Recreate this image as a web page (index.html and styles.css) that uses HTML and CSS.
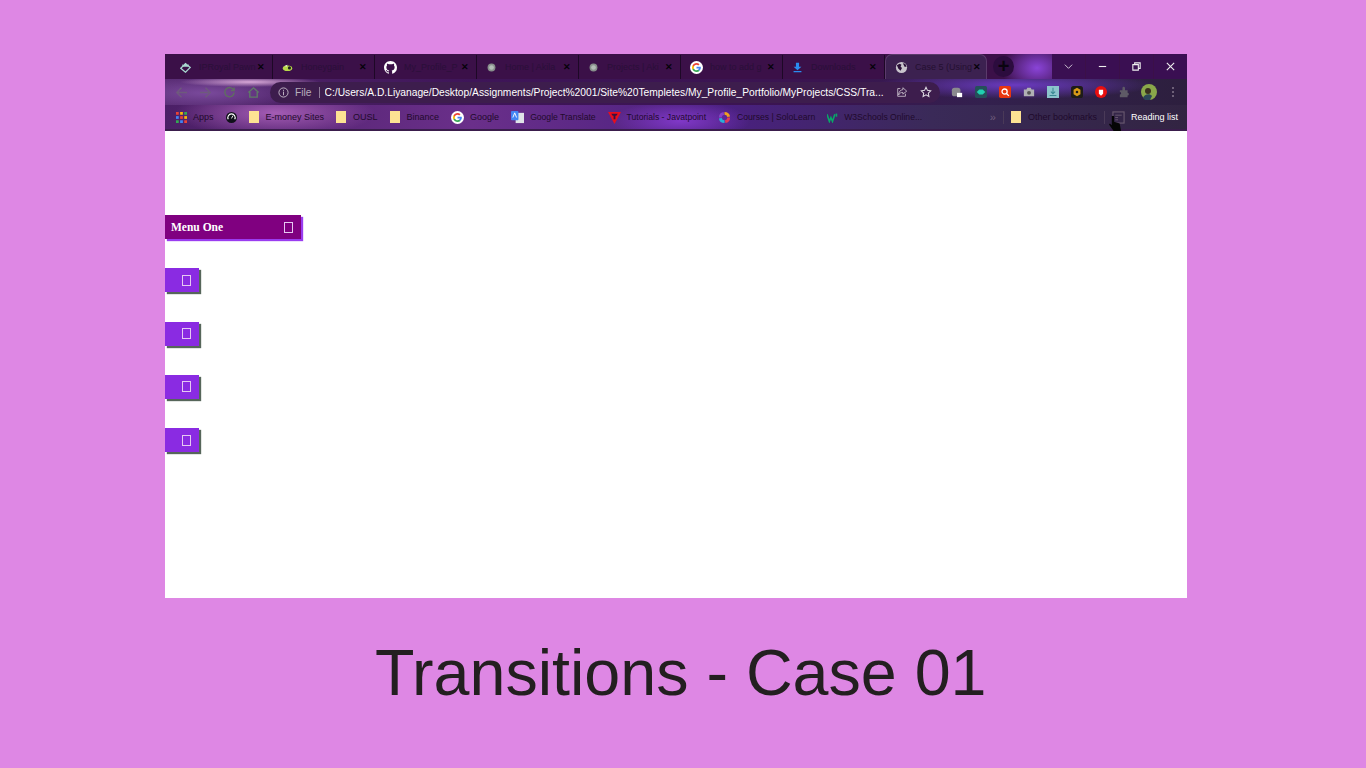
FILE: index.html
```html
<!DOCTYPE html>
<html lang="en">
<head>
  <meta charset="UTF-8" />
  <meta name="viewport" content="width=device-width, initial-scale=1.0" />
  <title>Transitions - Case 01</title>
  <link rel="stylesheet" href="styles.css">
</head>
<body>
  <main class="slide">
    <div class="browser">
      <!-- Browser tabs -->
      <div class="tabstrip">
        <div class="tab">
          <svg class="favicon" viewBox="0 0 14 14"><path d="M1 8l6-6 6 5-6 6z" fill="none" stroke="#a8d8d0" stroke-width="1.6"/><path d="M3 3l2 1 2-2 2 2 2-1v3H3z" fill="#a8d8d0"/></svg>
          <span class="tab-title">IPRoyal Pawn</span><span class="tab-close">✕</span>
        </div>
        <div class="tab">
          <svg class="favicon" viewBox="0 0 14 14"><ellipse cx="7" cy="8" rx="6" ry="3.6" fill="#b8d84a"/><circle cx="9.5" cy="7.5" r="2" fill="#222"/><path d="M3 5l4-1.5L6 6z" fill="#e8f0e0"/></svg>
          <span class="tab-title">Honeygain</span><span class="tab-close">✕</span>
        </div>
        <div class="tab">
          <svg class="favicon favicon-lg" viewBox="0 0 16 16"><path fill="#fff" d="M8 0C3.58 0 0 3.58 0 8c0 3.54 2.29 6.53 5.47 7.59.4.07.55-.17.55-.38v-1.34c-2.23.48-2.7-1.07-2.7-1.07-.36-.92-.89-1.17-.89-1.17-.73-.5.05-.49.05-.49.8.06 1.23.82 1.23.82.71 1.22 1.87.87 2.33.66.07-.52.28-.87.51-1.07-1.78-.2-3.64-.89-3.64-3.95 0-.87.31-1.59.82-2.15-.08-.2-.36-1.02.08-2.12 0 0 .67-.21 2.2.82a7.6 7.6 0 0 1 4 0c1.53-1.04 2.2-.82 2.2-.82.44 1.1.16 1.92.08 2.12.51.56.82 1.27.82 2.15 0 3.07-1.87 3.75-3.65 3.95.29.25.54.73.54 1.48v2.2c0 .21.15.46.55.38A8 8 0 0 0 16 8c0-4.42-3.58-8-8-8z"/></svg>
          <span class="tab-title">My_Profile_P</span><span class="tab-close">✕</span>
        </div>
        <div class="tab">
          <svg class="favicon" viewBox="0 0 14 14"><circle cx="7" cy="7" r="5" fill="#888f8c"/><circle cx="7" cy="7" r="3" fill="#b4bcb8"/></svg>
          <span class="tab-title">Home | Akila</span><span class="tab-close">✕</span>
        </div>
        <div class="tab">
          <svg class="favicon" viewBox="0 0 14 14"><circle cx="7" cy="7" r="5" fill="#888f8c"/><circle cx="7" cy="7" r="3" fill="#b4bcb8"/></svg>
          <span class="tab-title">Projects | Aki</span><span class="tab-close">✕</span>
        </div>
        <div class="tab">
          <svg class="favicon favicon-lg" viewBox="0 0 24 24"><circle cx="12" cy="12" r="12" fill="#fff"/><path fill="#4285f4" d="M20 12.2c0-.6-.1-1.100-.2-1.700H12v3.200h4.500c-.2 1-.8 1.900-1.700 2.500v2h2.700c1.600-1.400 2.500-3.500 2.500-6z"/><path fill="#34a853" d="M12 20.300c2.200 0 4.100-.7 5.500-2l-2.700-2c-.8.500-1.700.800-2.800.800-2.100 0-3.900-1.400-4.600-3.300H4.600v2.100c1.400 2.700 4.200 4.400 7.400 4.400z"/><path fill="#fbbc05" d="M7.400 13.800c-.4-1.100-.4-2.400 0-3.500V8.200H4.600c-1.200 2.400-1.200 5.200 0 7.600z"/><path fill="#ea4335" d="M12 7c1.200 0 2.300.4 3.200 1.200l2.400-2.400C16.100 4.500 14.100 3.700 12 3.700c-3.200 0-6 1.800-7.400 4.500l2.800 2.100C8.100 8.400 9.900 7 12 7z"/></svg>
          <span class="tab-title">how to add g</span><span class="tab-close">✕</span>
        </div>
        <div class="tab">
          <svg class="favicon" viewBox="0 0 14 14"><path fill="#2a8cf0" d="M5 1h4v5h3L7 10.500 2 6h3zM2 11.500h10V13H2z"/></svg>
          <span class="tab-title">Downloads</span><span class="tab-close">✕</span>
        </div>
        <div class="tab tab-active">
          <svg class="favicon favicon-lg" viewBox="0 0 14 14"><circle cx="7" cy="7" r="6" fill="#c8c4cc"/><path fill="#2a1038" d="M2 4.500l3-1.500 2 1-1 2 1.500 1.500L6 10.500 3.500 8zM8.500 2.500l2.500.5 1.500 3-2 .5-1-2z"/></svg>
          <span class="tab-title">Case 5 (Using</span><span class="tab-close">✕</span>
        </div>
        <span class="new-tab">+</span>
        <div class="window-controls">
          <span class="win-btn"><svg viewBox="0 0 12 12"><path d="M2 4l4 4 4-4" fill="none" stroke="#d8d0dc" stroke-width="1"/></svg></span>
          <span class="win-btn"><svg viewBox="0 0 12 12"><path d="M2 6h8" stroke="#eee" stroke-width="1.200"/></svg></span>
          <span class="win-btn"><svg viewBox="0 0 12 12"><path d="M2 4h6v6H2zM4 4V2h6v6H8" fill="none" stroke="#eee" stroke-width="1.200"/></svg></span>
          <span class="win-btn"><svg viewBox="0 0 12 12"><path d="M2 2l8 8M10 2l-8 8" stroke="#eee" stroke-width="1.200"/></svg></span>
        </div>
      </div>

      <!-- Address bar -->
      <div class="toolbar">
        <svg class="nav-icon" viewBox="0 0 14 14"><path d="M13 7H2M7 2L2 7l5 5" fill="none" stroke="#6e5a7c" stroke-width="1.500"/></svg>
        <svg class="nav-icon" viewBox="0 0 14 14"><path d="M1 7h11M7 2l5 5-5 5" fill="none" stroke="#6e5a7c" stroke-width="1.500"/></svg>
        <svg class="nav-icon" viewBox="0 0 14 14"><path d="M11.500 4.500A5 5 0 1 0 12 7M12 1.500v3.500H8.500" fill="none" stroke="#5f6e60" stroke-width="1.500"/></svg>
        <svg class="nav-icon" viewBox="0 0 14 14"><path d="M1.500 7L7 2l5.500 5M3 6.500V12h8V6.500" fill="none" stroke="#5f7a66" stroke-width="1.500"/></svg>
        <div class="omnibox">
          <svg class="info-icon" viewBox="0 0 12 12"><circle cx="6" cy="6" r="5" fill="none" stroke="#c8c0cc"/><path d="M6 5v4M6 3v1.200" stroke="#c8c0cc"/></svg>
          <span class="scheme">File</span>
          <span class="url">C:/Users/A.D.Liyanage/Desktop/Assignments/Project%2001/Site%20Templetes/My_Profile_Portfolio/MyProjects/CSS/Tra...</span>
          <svg class="omni-icon" viewBox="0 0 14 14"><path d="M8 2l4.500 4L8 9.500V7.500C5.500 7.500 4 8.500 3 10.500 3 7 5 4.500 8 4.300z M5 3H2v9h9V9" fill="none" stroke="#c8c0cc"/></svg>
          <svg class="omni-icon" viewBox="0 0 14 14"><path d="M7 1.500l1.700 3.600 3.800.5-2.800 2.700.7 3.900L7 10.400l-3.400 1.800.7-3.900L1.500 5.600l3.800-.5z" fill="none" stroke="#e0dce4" stroke-width="1.200"/></svg>
        </div>
        <div class="extensions">
          <svg class="ext" viewBox="0 0 14 14"><rect x="1" y="2" width="10" height="10" rx="3" fill="#8a8a8e"/><rect x="7" y="8" width="6" height="5" fill="#fff"/></svg>
          <svg class="ext" viewBox="0 0 14 14"><rect width="14" height="14" rx="2" fill="#24505a"/><path d="M2 7l3-3h4l3 3-3 3H5z" fill="#20d0b0"/></svg>
          <svg class="ext" viewBox="0 0 14 14"><rect width="14" height="14" rx="2" fill="#e8360e"/><circle cx="6.500" cy="6.500" r="3" fill="none" stroke="#fff" stroke-width="1.500"/><path d="M9 9l2.500 2.500" stroke="#fff" stroke-width="1.500"/></svg>
          <svg class="ext" viewBox="0 0 14 14"><path d="M1 4h3l1-2h4l1 2h3v8H1z" fill="#b0b0b4"/><circle cx="7" cy="8" r="2.300" fill="#555"/></svg>
          <svg class="ext" viewBox="0 0 14 14"><rect width="14" height="14" fill="#8cc4cc"/><path d="M7 2v7M4.500 6.500L7 9l2.500-2.500M3 11h8" fill="none" stroke="#3a8a94" stroke-width="1.200"/></svg>
          <svg class="ext" viewBox="0 0 14 14"><rect width="14" height="14" rx="3" fill="#1e1c18"/><path d="M7 2l4 2.500v5L7 12l-4-2.500v-5z" fill="#d89a18"/><circle cx="7" cy="7" r="1.500" fill="#1e1c18"/></svg>
          <svg class="ext" viewBox="0 0 14 14"><circle cx="7" cy="7" r="7" fill="#e80f0f"/><path d="M4.500 6.500V4.500h5v4.500L7 11.500 4.500 9z" fill="#fff"/></svg>
          <svg class="ext" viewBox="0 0 14 14"><path d="M1 5h3V2.500a1.500 1.500 0 0 1 3 0V5h3v3a1.500 1.500 0 0 1 0 3v2H1V10a1.500 1.500 0 0 0 0-3z" fill="#5e5a66"/></svg>
          <svg class="avatar" viewBox="0 0 16 16"><circle cx="8" cy="8" r="8" fill="#8aa84a"/><circle cx="7" cy="7" r="3" fill="#3a3020"/><path d="M2 14c1-4 7-5 9-2l-2 4H4z" fill="#2c4658"/></svg>
          <span class="kebab"></span>
        </div>
      </div>

      <!-- Bookmarks bar -->
      <div class="bookmarks">
        <span class="bookmark">
          <svg class="bm-icon" viewBox="0 0 12 12"><path fill="#ea4335" d="M0 0h3v3H0z"/><path fill="#fbbc05" d="M4.500 0h3v3h-3z"/><path fill="#34a853" d="M9 0h3v3H9z"/><path fill="#4285f4" d="M0 4.500h3v3H0z"/><path fill="#ea4335" d="M4.500 4.500h3v3h-3z"/><path fill="#fbbc05" d="M9 4.500h3v3H9z"/><path fill="#34a853" d="M0 9h3v3H0z"/><path fill="#4285f4" d="M4.500 9h3v3h-3z"/><path fill="#ea4335" d="M9 9h3v3H9z"/></svg>Apps
        </span>
        <span class="bookmark">
          <svg class="bm-icon" viewBox="0 0 12 12"><circle cx="6" cy="6" r="6" fill="#10101a"/><path d="M2.500 8a4 4 0 1 1 7 0" fill="none" stroke="#fff" stroke-width="1.200"/><path d="M6 7l1.500-3" stroke="#fff"/></svg>
        </span>
        <span class="bookmark"><i class="folder"></i>E-money Sites</span>
        <span class="bookmark"><i class="folder"></i>OUSL</span>
        <span class="bookmark"><i class="folder"></i>Binance</span>
        <span class="bookmark">
          <svg class="bm-icon bm-lg" viewBox="0 0 24 24"><circle cx="12" cy="12" r="12" fill="#fff"/><path fill="#4285f4" d="M20 12.200c0-.6-.1-1.100-.2-1.700H12v3.200h4.500c-.2 1-.8 1.900-1.700 2.500v2h2.700c1.600-1.400 2.500-3.500 2.500-6z"/><path fill="#34a853" d="M12 20.300c2.200 0 4.100-.7 5.500-2l-2.700-2c-.8.500-1.700.800-2.800.800-2.100 0-3.900-1.400-4.600-3.300H4.600v2.100c1.400 2.700 4.200 4.400 7.400 4.400z"/><path fill="#fbbc05" d="M7.400 13.800c-.4-1.100-.4-2.400 0-3.500V8.200H4.600c-1.200 2.400-1.200 5.200 0 7.600z"/><path fill="#ea4335" d="M12 7c1.200 0 2.300.4 3.200 1.200l2.400-2.400C16.100 4.500 14.100 3.700 12 3.700c-3.200 0-6 1.800-7.400 4.500l2.800 2.100C8.100 8.400 9.900 7 12 7z"/></svg>Google
        </span>
        <span class="bookmark bookmark-tight">
          <svg class="bm-icon bm-lg" viewBox="0 0 14 14"><rect x="5" y="2" width="9" height="11" fill="#dfe3e8"/><rect width="8" height="10" rx="1" fill="#4285f4"/><path d="M2 7l2-5 2 5" fill="none" stroke="#fff"/></svg>Google Translate
        </span>
        <span class="bookmark bookmark-tight">
          <svg class="bm-icon bm-lg" viewBox="0 0 14 14"><path d="M0 1h14L7 14z" fill="#e80d1c"/><path d="M3.500 3h7L9 5H8v4H6V5H5z" fill="#3a1040"/></svg>Tutorials - Javatpoint
        </span>
        <span class="bookmark bookmark-tight">
          <svg class="bm-icon bm-lg" viewBox="0 0 14 14"><path d="M7 1a6 6 0 0 1 6 5l-3 .5A3 3 0 0 0 7 4z" fill="#f0a020"/><path d="M13 7a6 6 0 0 1-5 6l-.5-3A3 3 0 0 0 10 7z" fill="#e03a5a"/><path d="M7 13a6 6 0 0 1-6-5l3-.5A3 3 0 0 0 7 10z" fill="#2ab0d8"/><path d="M1 7a6 6 0 0 1 5-6l.5 3A3 3 0 0 0 4 7z" fill="#8a40c8"/></svg>Courses | SoloLearn
        </span>
        <span class="bookmark bookmark-tight">
          <svg class="bm-icon" viewBox="0 0 14 12"><path d="M0 2l3 9 2-5 2 5 3-9" fill="none" stroke="#08a868" stroke-width="2"/><path d="M12 1v4" stroke="#08a868" stroke-width="2"/></svg>W3Schools Online...
        </span>
        <span class="chevrons">»</span>
        <span class="bar-sep"></span>
        <span class="bookmark"><i class="folder"></i>Other bookmarks</span>
        <span class="bar-sep"></span>
        <span class="bookmark reading">
          <svg class="bm-icon bm-lg" viewBox="0 0 14 14"><rect x="1" y="1" width="12" height="12" fill="none" stroke="#6a5a70" stroke-width="1.200"/><path d="M3.500 4.500h7M3.500 7h3M3.500 9.500h3" stroke="#6a5a70"/></svg>Reading list
          <svg class="hand-cursor" viewBox="0 0 14 16"><path d="M3 0h2.500v6l6 2 1.500 8H5L0 9l1-1 2 2z" fill="#050505"/></svg>
        </span>
      </div>

      <!-- The page being shown -->
      <div class="viewport">
        <nav class="menu">
          <a class="menu-item menu-item-open"><span class="menu-label">Menu One</span><i class="tofu"></i></a>
          <a class="menu-item"><i class="tofu"></i></a>
          <a class="menu-item"><i class="tofu"></i></a>
          <a class="menu-item"><i class="tofu"></i></a>
          <a class="menu-item"><i class="tofu"></i></a>
        </nav>
      </div>
    </div>

    <h1 class="caption">Transitions - Case 01</h1>
  </main>
</body>
</html>
```

FILE: styles.css
```css
/* Basic Reset */
* {
  box-sizing: border-box;
}

body {
  margin: 0;
  height: 768px;
  overflow: hidden;
  background: #de87e4;
  font-family: "Liberation Sans", Arial, sans-serif;
}

.slide {
  display: flex;
  flex-direction: column;
  align-items: flex-start;
  padding: 54px 0 0 165px;
}

.browser {
  width: 1022px;
  height: 544px;
  display: flex;
  flex-direction: column;
}

/* Tab strip */
.tabstrip {
  height: 25px;
  display: flex;
  align-items: flex-end;
  padding-left: 6px;
  background:
    radial-gradient(ellipse 36px 26px at 872px 14px, #8a44d8 0%, rgba(138, 68, 216, 0) 100%),
    #3b1048;
  font-size: 9px;
}

.tab {
  width: 102px;
  height: 24px;
  flex-shrink: 0;
  display: flex;
  align-items: center;
  padding: 0 5px 0 9px;
  border-right: 1px solid #1d0826;
  color: #2a0f38;
}

.tab-active {
  height: 25px;
  background: #3c2150;
  border: 1px solid #5b3a6b;
  border-bottom: 0;
  border-radius: 7px 7px 0 0;
}

.favicon {
  width: 11px;
  height: 11px;
  flex-shrink: 0;
  margin-right: 8px;
}

.favicon-lg {
  width: 13px;
  height: 13px;
  margin-right: 7px;
}

.tab-title {
  flex: 1;
  white-space: nowrap;
}

.tab-active .tab-title {
  color: #241030;
}

.tab-close {
  width: 12px;
  font-size: 9px;
  font-weight: bold;
  color: #06020a;
  text-align: center;
}

.new-tab {
  width: 21px;
  height: 21px;
  margin: 0 0 2px 6px;
  flex-shrink: 0;
  border-radius: 50%;
  background: #2c0c3e;
  color: #0a0410;
  font-size: 20px;
  font-weight: bold;
  line-height: 20px;
  text-align: center;
}

.window-controls {
  margin-left: auto;
  height: 25px;
  display: flex;
  gap: 1px;
}

.win-btn {
  width: 33px;
  display: flex;
  align-items: center;
  justify-content: center;
  background: #3a0f52;
}

.win-btn svg {
  width: 11px;
  height: 11px;
}

/* Address bar */
.toolbar {
  height: 26px;
  display: flex;
  align-items: center;
  padding-left: 10px;
  background:
    radial-gradient(ellipse 70px 5px at 85px 3px, #d8a8d8 0%, rgba(216, 168, 216, 0) 100%),
    radial-gradient(ellipse 100px 18px at 40px 14px, #7a4a9c 0%, rgba(122, 74, 156, 0) 100%),
    radial-gradient(ellipse 140px 14px at 850px 6px, #6a3ac0 0%, rgba(106, 58, 192, 0) 100%),
    linear-gradient(90deg, #54286e 0%, #3e1558 30%, #3a1450 65%, #33204e 80%, #2d1f3e 100%);
}

.nav-icon {
  width: 13px;
  height: 13px;
  margin-right: 11px;
  flex-shrink: 0;
}

.omnibox {
  width: 670px;
  height: 21px;
  margin-left: -1px;
  display: flex;
  align-items: center;
  padding: 0 8px 0 8px;
  border-radius: 11px;
  background: #3d1d4d;
  font-size: 10.250px;
}

.info-icon {
  width: 11px;
  height: 11px;
  flex-shrink: 0;
}

.scheme {
  margin-left: 6px;
  padding-right: 7px;
  border-right: 1px solid #8e7c98;
  color: #b8aebc;
}

.url {
  flex: 1;
  margin-left: 5px;
  color: #fff;
  white-space: nowrap;
  overflow: hidden;
}

.omni-icon {
  width: 12px;
  height: 12px;
  margin-left: 12px;
  flex-shrink: 0;
}

.extensions {
  flex: 1;
  display: flex;
  align-items: center;
  padding-left: 11px;
  gap: 12px;
}

.ext {
  width: 12px;
  height: 12px;
  flex-shrink: 0;
}

.avatar {
  width: 16px;
  height: 16px;
  flex-shrink: 0;
  margin-left: -2px;
}

.kebab {
  width: 2px;
  height: 2px;
  margin-left: 3px;
  background: #6e6078;
  box-shadow: 0 -4px 0 #6e6078, 0 4px 0 #6e6078;
}

/* Bookmarks bar */
.bookmarks {
  height: 26px;
  display: flex;
  align-items: center;
  padding: 0 9px 0 11px;
  gap: 12px;
  border-bottom: 2px solid #3a1d4c;
  background:
    radial-gradient(ellipse 100px 24px at 110px 8px, #a45cb4 0%, rgba(164, 92, 180, 0) 100%),
    radial-gradient(ellipse 70px 20px at 515px 16px, #8038c8 0%, rgba(128, 56, 200, 0) 100%),
    linear-gradient(90deg, #4b1f66 0%, #6a2f8a 30%, #4a2080 55%, #3a2a58 75%, #322442 100%);
  font-size: 9px;
  color: #1f0a2c;
  white-space: nowrap;
}

.bookmark {
  display: flex;
  align-items: center;
  gap: 6px;
}

.bookmark-tight {
  font-size: 8.600px;
}

.bm-icon {
  width: 11px;
  height: 11px;
  flex-shrink: 0;
}

.bm-lg {
  width: 13px;
  height: 13px;
}

.folder {
  width: 10px;
  height: 12px;
  margin-right: 1px;
  background: #fde293;
}

.chevrons {
  margin-left: auto;
  color: #6f5d7c;
  font-size: 11px;
}

.bar-sep {
  width: 1px;
  height: 13px;
  margin: 0 -5px;
  background: #4a3a58;
}

.reading {
  position: relative;
  color: #fff;
}

/* Hand cursor that lies over the reading list button */
.hand-cursor {
  position: absolute;
  left: -3px;
  top: 5px;
  width: 13px;
  height: 15px;
}

/* Page content */
.viewport {
  flex: 1;
  background: #fff;
  padding-top: 84px;
}

.menu {
  display: flex;
  flex-direction: column;
  align-items: flex-start;
  gap: 29.250px;
}

.menu-item {
  width: 34px;
  height: 24px;
  display: flex;
  align-items: center;
  justify-content: flex-end;
  padding-right: 8px;
  background: #8a2be2;
  box-shadow: 2px 2px 1px #56665a;
}

.menu-item-open {
  width: 136px;
  justify-content: space-between;
  padding: 0 8px 0 6px;
  background: #800080;
  box-shadow: 2px 2px 1px #9a3cf0;
}

.menu-label {
  font-family: "Liberation Serif", "Times New Roman", serif;
  font-size: 11.500px;
  font-weight: bold;
  color: #fff;
}

.tofu {
  width: 9px;
  height: 11px;
  border: 1px solid #e6c8f2;
}

/* Slide title under the browser */
.caption {
  margin: 34px 0 0 210px;
  font-size: 64.600px;
  font-weight: normal;
  line-height: 82px;
  color: #231f20;
}
```
